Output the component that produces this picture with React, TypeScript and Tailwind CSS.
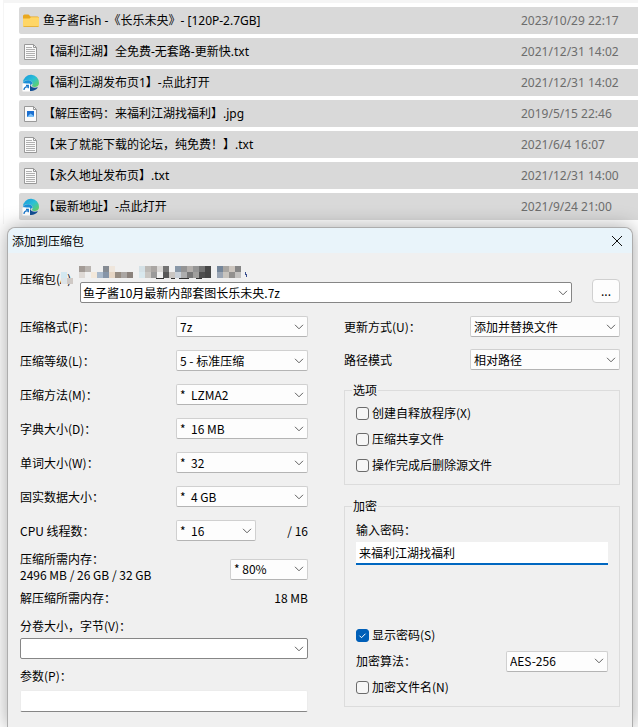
import { useState } from 'react';
import type { ReactNode } from 'react';
import { clsx } from 'clsx';

type FileKind = 'folder' | 'text' | 'edge' | 'image';

const files: { kind: FileKind; name: string; date: string }[] = [
  { kind: 'folder', name: '鱼子酱Fish -《长乐未央》- [120P-2.7GB]', date: '2023/10/29 22:17' },
  { kind: 'text', name: '【福利江湖】全免费-无套路-更新快.txt', date: '2021/12/31 14:02' },
  { kind: 'edge', name: '【福利江湖发布页1】-点此打开', date: '2021/12/31 14:02' },
  { kind: 'image', name: '【解压密码：来福利江湖找福利】.jpg', date: '2019/5/15 22:46' },
  { kind: 'text', name: '【来了就能下载的论坛，纯免费！】.txt', date: '2021/6/4 16:07' },
  { kind: 'text', name: '【永久地址发布页】.txt', date: '2021/12/31 14:00' },
  { kind: 'edge', name: '【最新地址】-点此打开', date: '2021/9/24 21:00' },
];

const settings = [
  { id: 'format', label: '压缩格式(F)：', value: '7z' },
  { id: 'level', label: '压缩等级(L)：', value: '5 - 标准压缩' },
  { id: 'method', label: '压缩方法(M)：', value: '*\u00a0 LZMA2' },
  { id: 'dict', label: '字典大小(D)：', value: '*\u00a0 16 MB' },
  { id: 'word', label: '单词大小(W)：', value: '*\u00a0 32' },
  { id: 'solid', label: '固实数据大小：', value: '*\u00a0 4 GB' },
];

// x, y, colour of each 6px block
const blocks: [number, number, string][] = [
  [1, 6, '#d3e8f1'], [1, 12, '#dde4e8'], [7, 12, '#cfc9c5'],
  [19, 0, '#a39b96'], [25, 0, '#b9b4b0'], [19, 6, '#ded9d5'], [31, 6, '#f3e8da'],
  [43, 0, '#858b93'], [49, 0, '#efe6dc'], [37, 6, '#a9b9cb'], [43, 6, '#8695a8'],
  [49, 6, '#e6d6c5'], [55, 6, '#968c82'], [61, 6, '#aaa6a3'], [67, 6, '#8b827c'],
  [79, 0, '#d5e1e6'], [85, 0, '#bcb9b5'], [91, 0, '#aaa6a3'], [97, 0, '#dad8d6'], [103, 0, '#737373'],
  [79, 6, '#d9e8ed'], [85, 6, '#c9c6c2'], [91, 6, '#9a9a9a'], [103, 6, '#575757'],
  [115, 0, '#8998a8'], [121, 0, '#949494'], [127, 0, '#b3afac'], [133, 0, '#959595'], [139, 0, '#737373'], [145, 0, '#474747'],
  [109, 6, '#c9c5c1'], [115, 6, '#c9d0d8'], [121, 6, '#adadad'], [127, 6, '#777777'], [133, 6, '#a09f9d'], [139, 6, '#4e4e4e'], [145, 6, '#454545'],
  [157, 0, '#75869a'], [163, 0, '#a9a6a2'], [169, 0, '#ccc5be'], [175, 0, '#858585'],
  [157, 6, '#9aa5b4'], [163, 6, '#c8c4be'], [169, 6, '#92908e'], [175, 6, '#c3c1bf'],
];

function FileIcon({ kind }: { kind: FileKind }) {
  if (kind === 'folder') {
    return (
      <svg viewBox="0 0 18 18" className="size-[18px] shrink-0">
        <path d="M1 4q0-1.500 1.500-1.500h4L8.500 4.500h7q1.500 0 1.500 1.500v8H1z" fill="#e9a820" />
        <path d="M1 6.500h6.500l1.500-1.200h7q1 0 1 1v7.200q0 1.500-1.500 1.500h-13Q1 15 1 13.500z" fill="#ffd666" />
        <path d="M1.500 14.500h15" stroke="#e6b23c" />
      </svg>
    );
  }
  if (kind === 'edge') {
    return (
      <svg viewBox="0 0 18 18" className="size-[18px] shrink-0">
        <defs>
          <linearGradient id="edge-top" x1="0" x2="1" y1="0" y2="1">
            <stop offset="0" stopColor="#1595df" />
            <stop offset="0.500" stopColor="#2bc0d5" />
            <stop offset="1" stopColor="#70d64b" />
          </linearGradient>
        </defs>
        <path d="M1 8.500A8 8 0 0 1 17 9c0 3-2.400 4-4.500 4-2 0-3-.8-2.300-1.700 1-1.300.5-4.300-2.700-4.800C4.500 6 2 6.800 1 8.500z" fill="url(#edge-top)" />
        <path d="M1 9C2 6.800 5 6 7.500 6.500c2 .4 3.100 1.800 3.100 3.200L8 11z" fill="#1a8fd8" />
        <path d="M8 10c0 3 3.500 4.500 8 3.300C14.500 15.800 11.800 17 9 17H8z" fill="#134f94" />
        <rect x="0.500" y="9.500" width="7.500" height="8" rx="0.500" fill="#fff" />
        <path d="M2 16c0-2 1-3.200 3.800-3.400M4 11.300h2.300v3" fill="none" stroke="#1474c9" strokeWidth="1.200" />
      </svg>
    );
  }
  return (
    <svg viewBox="0 0 18 18" className="size-[18px] shrink-0">
      <path d="M2.500 1.500h9l3 3v12h-12z" fill="#fafafa" stroke="#999" />
      <path d="M11.500 1.500v3h3" fill="none" stroke="#999" />
      {kind === 'text' ? (
        <path d="M4 4.500h6M4 6.500h9M4 8.500h9M4 10.500h9M4 12.500h9M4 14.500h9" stroke="#b0b0b0" />
      ) : (
        <>
          <rect x="5" y="6" width="7" height="6" fill="#1b6fd0" />
          <path d="M5 12l3.500-3.500L12 11v1z" fill="#7cc0f5" />
        </>
      )}
    </svg>
  );
}

function Chevron() {
  return (
    <svg viewBox="0 0 10 6" className="h-1.5 w-2.5" fill="none" stroke="#606060">
      <path d="M1 0.800l4 4 4-4" />
    </svg>
  );
}

function Select({ id, value, className }: { id: string; value: string; className?: string }) {
  return (
    <div className={clsx('relative h-[21px]', className)}>
      <select
        id={id}
        className="block h-full w-full appearance-none rounded-xs border border-[#d0d0d0] border-b-[#b4b4b4] bg-[#fdfdfd] pr-4 pl-[3px] outline-none"
      >
        <option>{value}</option>
      </select>
      <span className="pointer-events-none absolute inset-y-0 right-1 flex items-center">
        <Chevron />
      </span>
    </div>
  );
}

function ComboBox({ id, value, label }: { id: string; value: string; label: string }) {
  return (
    <div className="flex h-[21px] items-center rounded-xs border border-[#868686] bg-white pr-[3px]">
      <input id={id} defaultValue={value} className="h-full min-w-0 flex-1 px-0.5 outline-none" />
      <button type="button" aria-label={label}>
        <Chevron />
      </button>
    </div>
  );
}

function Checkbox({ children, defaultChecked = false }: { children: ReactNode; defaultChecked?: boolean }) {
  const [checked, setChecked] = useState(defaultChecked);

  return (
    <label className="flex h-[26px] items-center gap-[3px]">
      <span className="relative size-[13px]">
        <input
          type="checkbox"
          checked={checked}
          onChange={(e) => setChecked(e.target.checked)}
          className="block size-[13px] appearance-none rounded-[3px] border border-[#6b6b6b] bg-[#f6f6f6] checked:border-[#005fb8] checked:bg-[#005fb8]"
        />
        {checked && (
          <svg viewBox="0 0 13 13" className="pointer-events-none absolute inset-0" fill="none" stroke="#fff">
            <path d="M3.500 6.700l2 2 4-4" />
          </svg>
        )}
      </span>
      {children}
    </label>
  );
}

function FileList() {
  return (
    <table className="w-full table-fixed border-separate border-spacing-x-0 border-spacing-y-1 font-['Noto_Sans','Noto_Sans_CJK_SC',sans-serif]">
      <tbody>
        {files.map((file) => (
          <tr key={file.name} className="h-[27px] bg-[#d9d9d9]">
            <td className="rounded-l-xs p-0 pl-[3px]">
              <div className="flex items-center gap-[3px] whitespace-nowrap">
                <FileIcon kind={file.kind} />
                <span>{file.name}</span>
              </div>
            </td>
            <td className="w-[117px] p-0 whitespace-nowrap text-[#6d6d6d]">{file.date}</td>
          </tr>
        ))}
      </tbody>
    </table>
  );
}

function ArchiveRow() {
  return (
    <div className="grid grid-cols-[60px_1fr_48px] items-end">
      <div className="relative h-[37px] pt-[5px]">
        <label htmlFor="archive">压缩包(A)</label>
        <svg viewBox="0 0 190 18" className="absolute top-0 left-10 h-[18px] w-[190px] max-w-none" shapeRendering="crispEdges">
          {blocks.map(([x, y, fill]) => (
            <rect key={`${x}-${y}`} x={x} y={y} width="6" height="6" fill={fill} />
          ))}
          <path d="M96 12.500h8M111 12.500h4M119 12.500h10M136 12.500h6" stroke="#333" />
          <path d="M185 6l2 5" stroke="#3a4f8f" />
        </svg>
      </div>
      <ComboBox id="archive" value="鱼子酱10月最新内部套图长乐未央.7z" label="历史记录" />
      <button type="button" className="ml-5 h-6 rounded border border-[#d0d0d0] bg-[#fdfdfd]">
        ...
      </button>
    </div>
  );
}

function CompressionColumn() {
  return (
    <div>
      <div className="flex flex-col gap-[13px]">
        {settings.map(({ id, label, value }) => (
          <div key={id} className="flex items-center justify-between">
            <label htmlFor={id}>{label}</label>
            <Select id={id} value={value} className="w-[132px]" />
          </div>
        ))}
        <div className="flex items-center">
          <label htmlFor="threads" className="flex-1">CPU 线程数：</label>
          <Select id="threads" value={'*\u00a0 16'} className="w-20" />
          <span className="w-[52px] text-right">/ 16</span>
        </div>
      </div>
      <div className="mt-[10px] flex items-center justify-between">
        <label htmlFor="memory" className="leading-4">
          压缩所需内存：
          <br />
          2496 MB / 26 GB / 32 GB
        </label>
        <Select id="memory" value="* 80%" className="mt-1 w-[78px]" />
      </div>
      <div className="mt-[5px] flex justify-between leading-5">
        <span>解压缩所需内存：</span>
        <span>18 MB</span>
      </div>
      <label htmlFor="volume" className="mt-2 mb-0.5 block leading-5">分卷大小，字节(V)：</label>
      <ComboBox id="volume" value="" label="选择分卷大小" />
      <label htmlFor="params" className="mt-[7px] mb-1 block leading-5">参数(P)：</label>
      <input
        id="params"
        className="block h-[22px] w-full rounded-xs border border-[#ececec] border-b-[#868686] bg-white px-1 outline-none"
      />
    </div>
  );
}

function OptionsColumn() {
  return (
    <div>
      <div className="flex flex-col gap-3">
        <div className="flex items-center justify-between">
          <label htmlFor="update">更新方式(U)：</label>
          <Select id="update" value="添加并替换文件" className="w-[150px]" />
        </div>
        <div className="flex items-center justify-between">
          <label htmlFor="paths">路径模式</label>
          <Select id="paths" value="相对路径" className="w-[150px]" />
        </div>
      </div>
      <fieldset className="mt-[10px] border border-[#dcdcdc] px-[11px] pb-[6px]">
        <legend className="-ml-1 px-px leading-5">选项</legend>
        <Checkbox>创建自释放程序(X)</Checkbox>
        <Checkbox>压缩共享文件</Checkbox>
        <Checkbox>操作完成后删除源文件</Checkbox>
      </fieldset>
      <fieldset className="mt-[11px] border border-[#dcdcdc] px-[11px] pb-[6px]">
        <legend className="-ml-1 px-px leading-5">加密</legend>
        <label htmlFor="password" className="mt-1 mb-0.5 block leading-5">输入密码：</label>
        <input
          id="password"
          defaultValue="来福利江湖找福利"
          className="block h-[23px] w-full border-b-2 border-[#0067c0] bg-white px-[3px] outline-none"
        />
        <div className="mt-[57px]">
          <Checkbox defaultChecked>显示密码(S)</Checkbox>
        </div>
        <div className="flex h-[26px] items-center justify-between">
          <label htmlFor="cipher">加密算法：</label>
          <Select id="cipher" value="AES-256" className="w-[102px]" />
        </div>
        <Checkbox>加密文件名(N)</Checkbox>
      </fieldset>
    </div>
  );
}

export default function App() {
  return (
    <div className="flex min-h-screen flex-col overflow-hidden bg-white text-[12px] leading-4 text-black">
      <div className="ml-[3px] border-t-[3px] border-l border-[#f5f5f5] pl-[15px]">
        <FileList />
      </div>

      <div
        role="dialog"
        aria-labelledby="dialog-title"
        className="mt-[3px] mr-[5px] ml-[7px] flex-1 rounded-t-lg border border-b-0 border-[#adadad] bg-[#f0f0f0] pb-4 font-['Noto_Sans_CJK_SC',sans-serif] shadow-[0_0_20px_rgba(0,0,0,0.35)]"
      >
        <div className="flex h-[25px] items-center justify-between rounded-t-lg bg-[#e9f4fa] pr-[9px] pl-1">
          <h1 id="dialog-title">添加到压缩包</h1>
          <button type="button" aria-label="关闭">
            <svg viewBox="0 0 12 12" className="size-3" fill="none" stroke="#111">
              <path d="M1 1l10 10M11 1L1 11" />
            </svg>
          </button>
        </div>
        <form className="px-3 pt-[13px]">
          <ArchiveRow />
          <div className="mt-[13px] grid grid-cols-[288fr_276fr] gap-9">
            <CompressionColumn />
            <OptionsColumn />
          </div>
        </form>
      </div>
    </div>
  );
}
